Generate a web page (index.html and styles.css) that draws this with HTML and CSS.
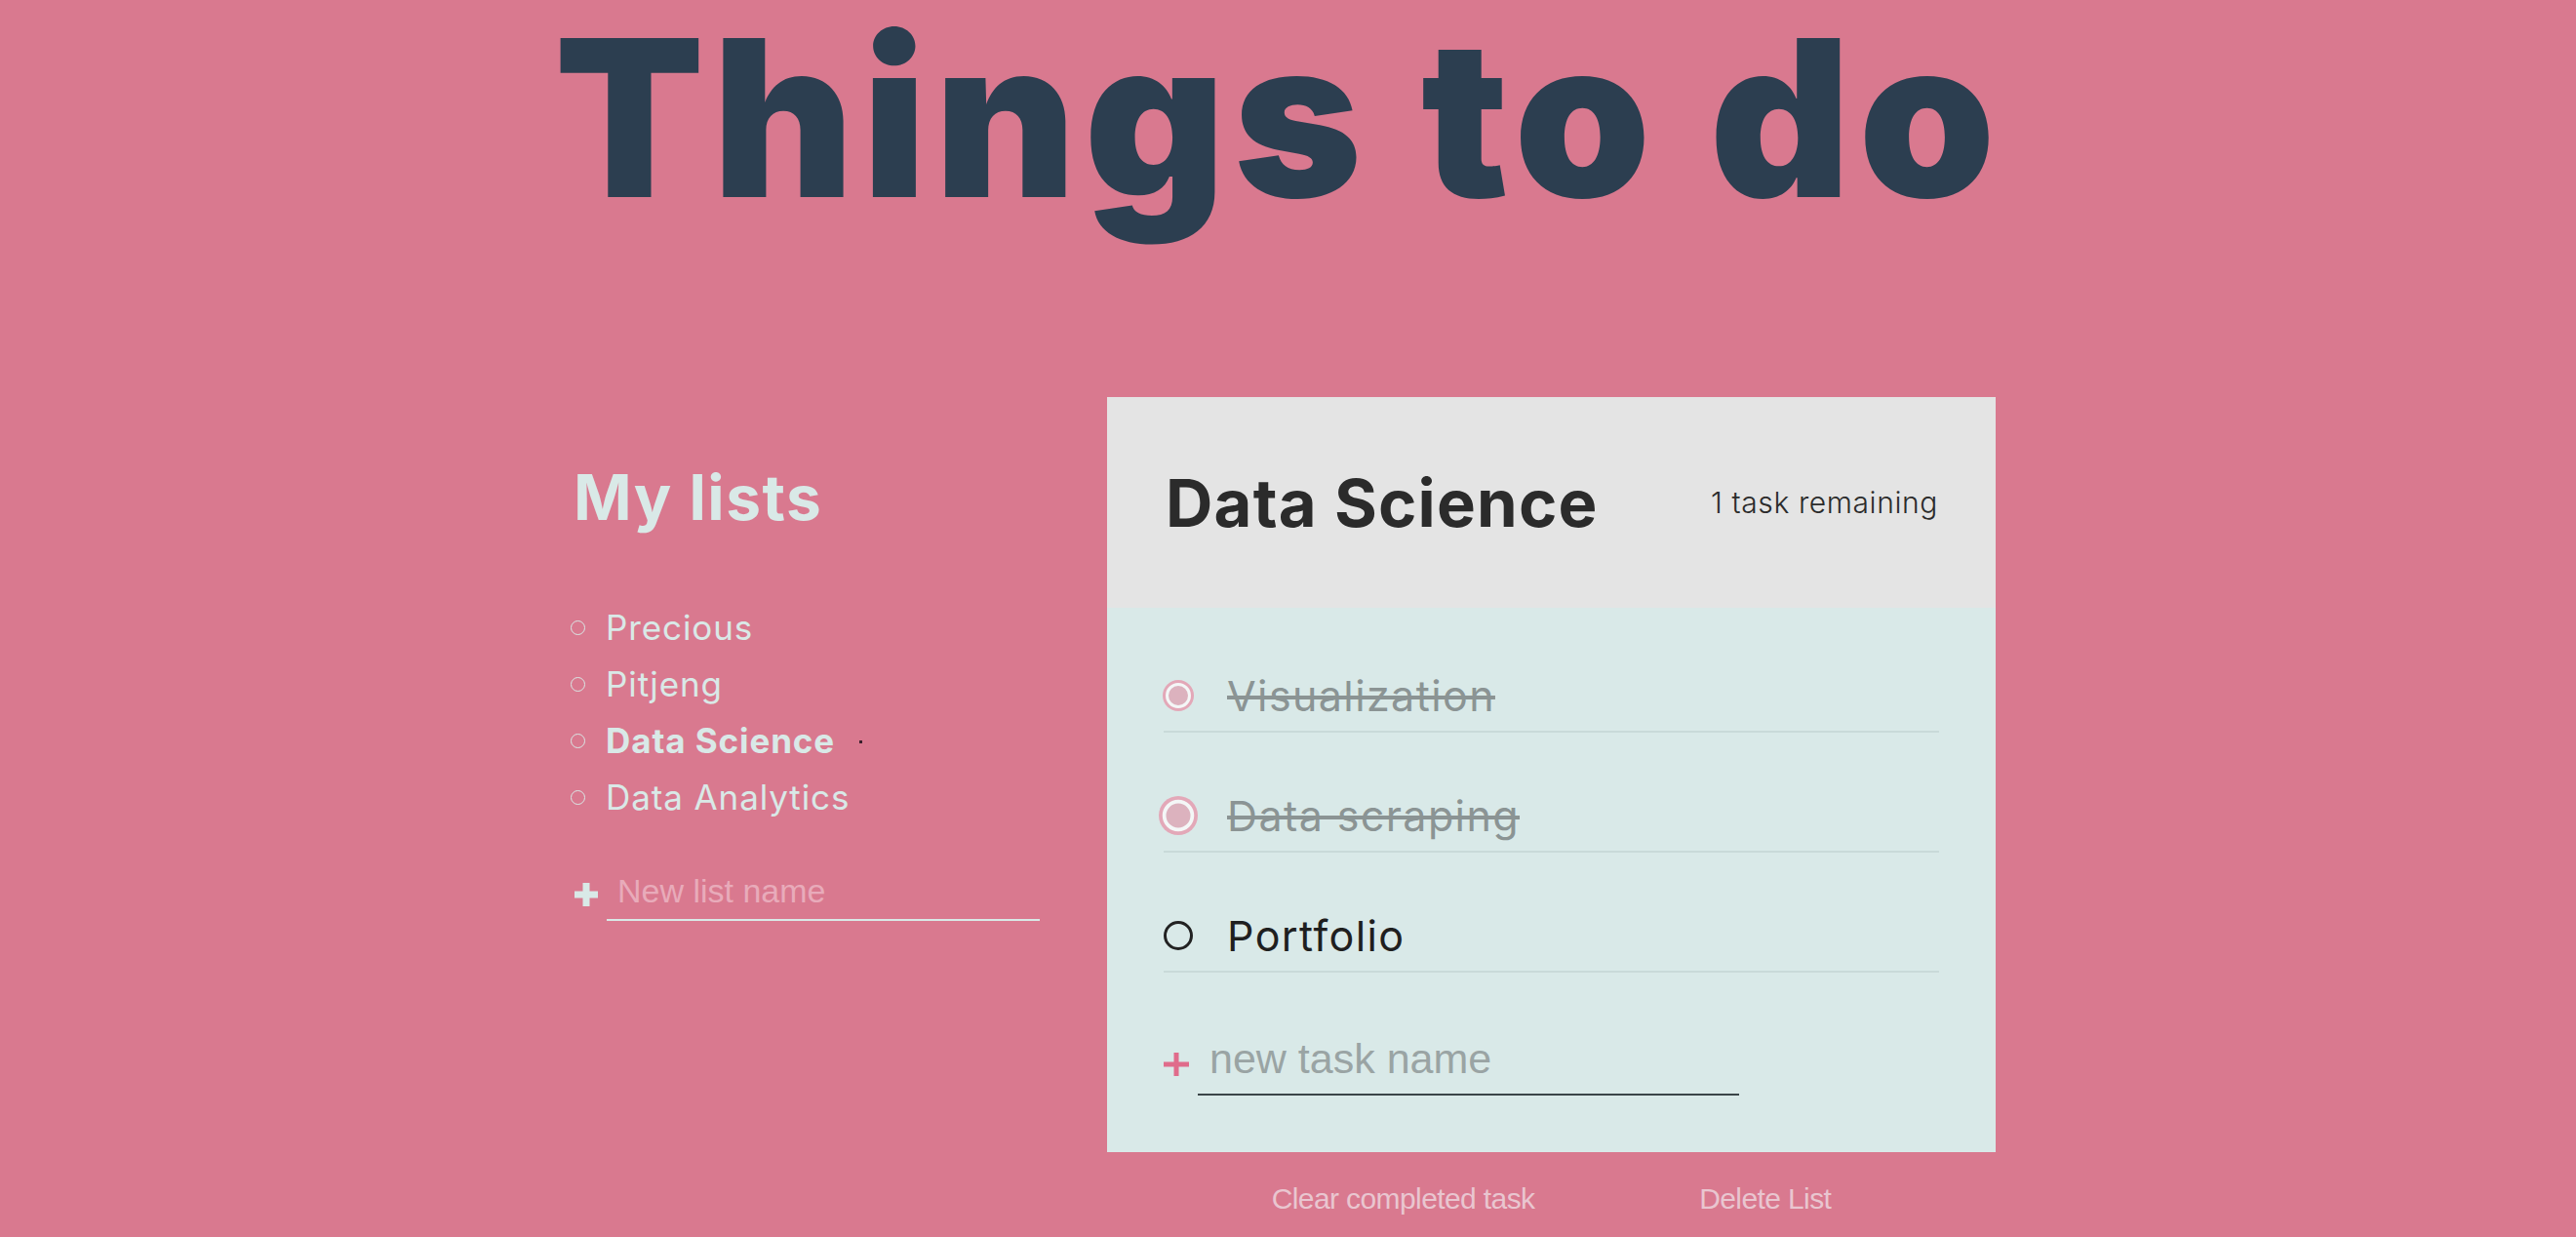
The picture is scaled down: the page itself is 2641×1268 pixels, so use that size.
FILE: index.html
```html
<!DOCTYPE html>
<html lang="en">
<head>
<meta charset="utf-8">
<title>Things to do</title>
<link rel="stylesheet" href="styles.css">
</head>
<body>
  <div class="page">
    <h1 class="title">Things to do</h1>
    <div class="board">
      <aside class="lists">
        <h2 class="lists-title">My lists</h2>
        <ul class="list-items">
          <li class="list-item">Precious</li>
          <li class="list-item">Pitjeng</li>
          <li class="list-item active">Data Science<span class="dot"></span></li>
          <li class="list-item">Data Analytics</li>
        </ul>
        <form class="new-list">
          <svg class="plus" width="24" height="24" viewBox="0 0 24 24"><path d="M12 0v24M0 12h24" stroke="currentColor" stroke-width="7"/></svg>
          <input class="new-list-input" type="text" placeholder="New list name">
        </form>
      </aside>
      <section class="todo">
        <div class="card">
          <header class="card-head">
            <h2 class="card-title">Data Science</h2>
            <p class="card-count">1 task remaining</p>
          </header>
          <div class="card-body">
            <div class="task done"><span class="check"></span><span class="task-text">Visualization</span></div>
            <div class="task done"><span class="check big"></span><span class="task-text">Data scraping</span></div>
            <div class="task"><span class="check"></span><span class="task-text">Portfolio</span></div>
            <form class="new-task">
              <svg class="plus plus-pink" width="26" height="24" viewBox="0 0 26 24"><path d="M13 0v24M0 12h26" stroke="currentColor" stroke-width="5"/></svg>
              <input class="new-task-input" type="text" placeholder="new task name">
            </form>
          </div>
        </div>
        <div class="actions">
          <button class="action" type="button">Clear completed task</button>
          <button class="action" type="button">Delete List</button>
        </div>
      </section>
    </div>
  </div>
</body>
</html>
```

FILE: styles.css
```css
* { box-sizing: border-box; }

html, body {
  margin: 0;
  padding: 0;
}

body {
  background: #d9798f;
  font-family: Inter, "Noto Sans", sans-serif;
  height: 1268px;
  overflow: hidden;
}

.page {
  width: 1465px;
  padding-right: 7px;
  margin: 0 auto;
}

.title {
  margin: 0 -40px;
  padding: 9px 12px 0 0;
  font-family: Inter, sans-serif;
  font-weight: 900;
  font-size: 224px;
  line-height: 224px;
  letter-spacing: 8px;
  color: #2c3e50;
  text-align: center;
  white-space: nowrap;
}

.board {
  display: grid;
  grid-template-columns: 547px 911px;
  margin-top: 174px;
}

/* left column */
.lists {
  color: #d9e9e7;
}

.lists-title {
  margin: 65px 0 0;
  font-size: 64px;
  font-weight: 700;
  line-height: 76px;
  letter-spacing: 1.5px;
}

.list-items {
  list-style: none;
  margin: 66px 0 0;
  padding: 0;
}

.list-item {
  display: flex;
  align-items: center;
  font-size: 35px;
  line-height: 58px;
  font-weight: 400;
  letter-spacing: 0.9px;
}

.list-item::before {
  content: "";
  width: 13px;
  height: 13px;
  border: 1.5px solid #d9e9e7;
  border-radius: 50%;
  margin-left: -3px;
  margin-right: 21px;
  flex: none;
}

.list-item.active {
  font-weight: 700;
}

.dot {
  width: 3px;
  height: 3px;
  background: #3b1f2c;
  margin-left: 25px;
  margin-top: 2px;
}

.new-list {
  display: flex;
  align-items: center;
  margin-top: 44px;
}

.plus {
  flex: none;
  color: #d9e9e7;
}

.new-list .plus {
  margin-left: 1px;
  margin-right: 9px;
}

.new-list-input {
  width: 444px;
  height: 54px;
  padding: 0 0 6px 11px;
  border: none;
  border-bottom: 2px solid #d9e9e7;
  background: transparent;
  font-family: "Liberation Sans", Arial, sans-serif;
  font-size: 34px;
  color: #d9e9e7;
  outline: none;
}

.new-list-input::placeholder {
  color: #e8abba;
}

/* card */
.card {
  background: #d9e9e8;
}

.card-head {
  height: 216px;
  background: #e4e4e4;
  display: flex;
  align-items: center;
  justify-content: space-between;
  padding: 0 59px 0 60px;
  color: #2b2b2b;
}

.card-title {
  margin: 0;
  font-size: 67px;
  font-weight: 700;
  line-height: 67px;
  letter-spacing: 1.2px;
}

.card-count {
  margin: 0;
  font-size: 30px;
  font-weight: 300;
  line-height: 30px;
  letter-spacing: 0.6px;
}

.card-body {
  padding: 5px 58px 58px;
}

.task {
  display: flex;
  align-items: center;
  padding: 60px 0 11px;
  border-bottom: 2px solid #c9dad9;
  font-size: 43px;
  line-height: 50px;
  letter-spacing: 1.4px;
  color: #1f1f1f;
}

.check {
  flex: none;
  width: 30px;
  height: 30px;
  margin-right: 35px;
  border-radius: 50%;
  border: 3px solid #222;
}

.task.done .task-text {
  color: #8b9494;
  text-decoration: line-through;
  text-decoration-thickness: 4px;
  text-decoration-color: #8b9494;
}

.task.done .check {
  border: 3px solid #f4f7f7;
  background: #dcb2be;
  box-shadow: 0 0 0 3px #e3a8b8;
  width: 26px;
  height: 26px;
  margin-left: 2px;
  margin-right: 37px;
}

.task.done .check.big {
  transform: scale(1.25);
}

.new-task {
  display: flex;
  align-items: center;
  margin-top: 62px;
}

.plus-pink {
  color: #e06c8b;
  margin-right: 9px;
}

.new-task-input {
  width: 555px;
  height: 64px;
  padding: 0 0 10px 12px;
  border: none;
  border-bottom: 2px solid #3a4548;
  background: transparent;
  font-family: "Liberation Sans", Arial, sans-serif;
  font-size: 43px;
  color: #333;
  outline: none;
}

.new-task-input::placeholder {
  color: #9aa4a4;
}

/* actions */
.actions {
  display: flex;
  justify-content: space-evenly;
  margin-top: 33px;
}

.action {
  background: none;
  border: none;
  padding: 0;
  font-family: "Liberation Sans", Arial, sans-serif;
  font-size: 30px;
  line-height: 30px;
  letter-spacing: -0.6px;
  color: #e9c6d0;
}
```
